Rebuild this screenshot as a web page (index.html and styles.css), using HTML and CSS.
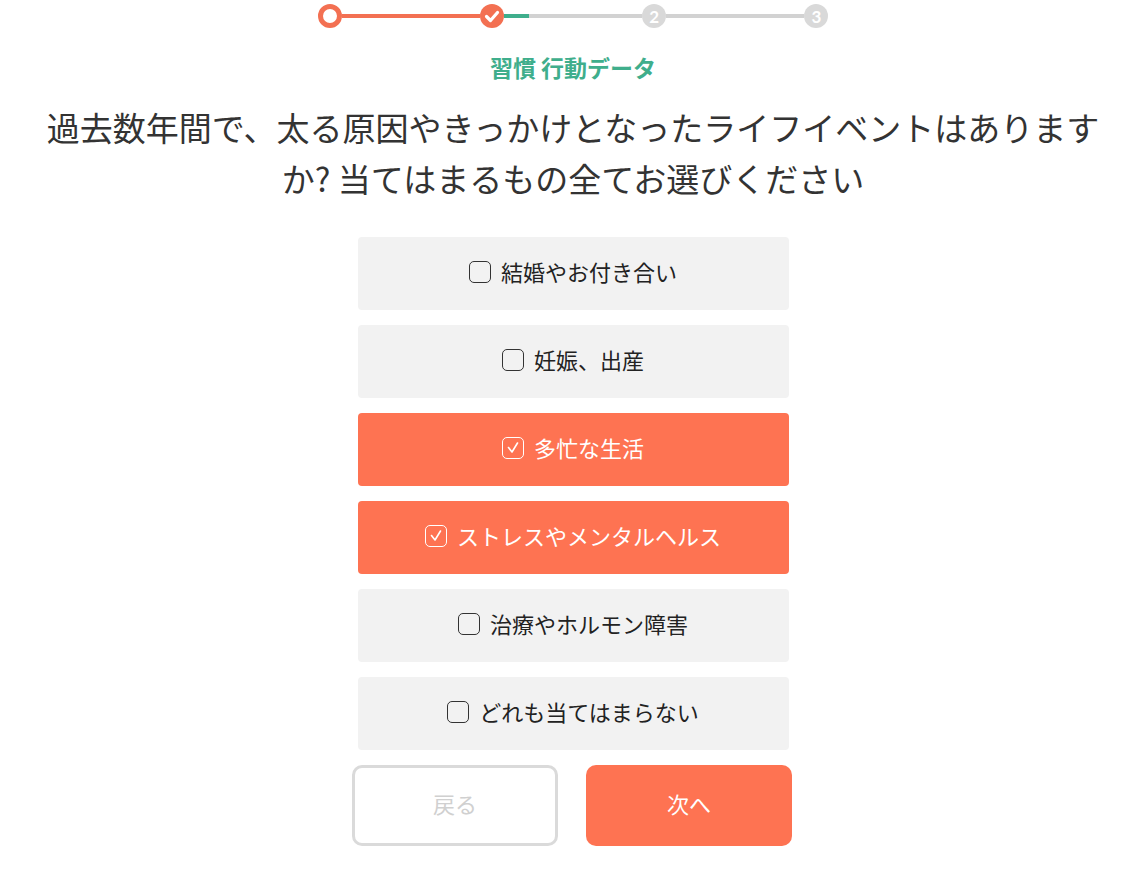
FILE: index.html
```html
<!DOCTYPE html>
<html lang="ja">
<head>
<meta charset="utf-8">
<link rel="stylesheet" href="styles.css">
</head>
<body>
<div class="page">
  <div class="progress">
    <span class="step step-current"></span>
    <span class="line line-done"></span>
    <span class="step step-done">
      <svg viewBox="0 0 24 24" width="24" height="24"><path d="M6.5 12.5 L10.5 16.5 L17.5 8.5" fill="none" stroke="#fff" stroke-width="3.2" stroke-linecap="round" stroke-linejoin="round"/></svg>
    </span>
    <span class="line line-partial"></span>
    <span class="step step-todo">2</span>
    <span class="line"></span>
    <span class="step step-todo">3</span>
  </div>
  <div class="section-title">習慣 行動データ</div>
  <h1 class="question">過去数年間で、太る原因やきっかけとなったライフイベントはありますか? 当てはまるもの全てお選びください</h1>
  <div class="options">
    <div class="option"><span class="box"></span>結婚やお付き合い</div>
    <div class="option"><span class="box"></span>妊娠、出産</div>
    <div class="option option-on"><span class="box"><svg viewBox="0 0 20 20" width="20" height="20"><path d="M5.5 9.5 L9 14 L14.5 5" fill="none" stroke="#fff" stroke-width="1.6" stroke-linecap="round" stroke-linejoin="round"/></svg></span>多忙な生活</div>
    <div class="option option-on"><span class="box"><svg viewBox="0 0 20 20" width="20" height="20"><path d="M5.5 9.5 L9 14 L14.5 5" fill="none" stroke="#fff" stroke-width="1.6" stroke-linecap="round" stroke-linejoin="round"/></svg></span>ストレスやメンタルヘルス</div>
    <div class="option"><span class="box"></span>治療やホルモン障害</div>
    <div class="option"><span class="box"></span>どれも当てはまらない</div>
  </div>
  <div class="actions">
    <button class="btn btn-back">戻る</button>
    <button class="btn btn-next">次へ</button>
  </div>
</div>
</body>
</html>
```
FILE: styles.css
```css
* { box-sizing: border-box; }
html, body { margin: 0; padding: 0; background: #fff; }
body {
  font-family: "Noto Sans CJK JP", "Noto Sans", sans-serif;
  color: #333;
}
.page {
  width: 1146px;
  display: flex;
  flex-direction: column;
  align-items: center;
}
.progress {
  display: flex;
  align-items: center;
  width: 511px;
  margin-top: 4px;
}
.step {
  width: 24px;
  height: 24px;
  border-radius: 50%;
  flex: none;
  display: flex;
  align-items: center;
  justify-content: center;
}
.step-current { background: #fff; border: 5px solid #f37052; }
.step-done { background: #f37052; }
.step-todo {
  background: #d9d9d9;
  color: #fff;
  font-family: "Lato", sans-serif;
  font-weight: 700;
  font-size: 17px;
  line-height: 1;
}
.line {
  flex: 1;
  height: 4px;
  background: #d2d2d2;
}
.line-done { background: #f37052; }
.line-partial { background: linear-gradient(to right, #3fae8c 0, #3fae8c 25px, #d2d2d2 25px); }
.section-title {
  margin-top: 24px;
  color: #3fae8c;
  font-size: 23px;
  font-weight: 700;
  line-height: 30px;
}
.question {
  margin: 20px 0 0;
  font-size: 33px;
  font-weight: 400;
  line-height: 51px;
  text-align: center;
  width: 1070px;
  color: #333;
}
.options {
  margin-top: 33px;
  width: 431px;
  display: flex;
  flex-direction: column;
  gap: 15px;
}
.option {
  height: 73px;
  padding-bottom: 6px;
  border-radius: 4px;
  background: #f2f2f2;
  display: flex;
  align-items: center;
  justify-content: center;
  gap: 10px;
  font-size: 22px;
  color: #222;
}
.option-on { background: #fe7352; color: #fff; }
.box {
  width: 22px;
  height: 22px;
  border: 1.5px solid #333;
  border-radius: 5px;
  display: flex;
  align-items: center;
  justify-content: center;
  flex: none;
  margin-top: 3px;
}
.option-on .box { border-color: #fff; }
.actions {
  margin-top: 15px;
  display: flex;
  gap: 28px;
  margin-left: -2px;
}
.btn {
  width: 206px;
  height: 81px;
  padding: 0 0 5px;
  border-radius: 10px;
  font-family: "Noto Sans CJK JP", sans-serif;
  font-size: 22px;
  cursor: pointer;
}
.btn-back { background: #fff; border: 3px solid #dadada; color: #d0d0d0; }
.btn-next { background: #fe7352; border: none; color: #fff; }
```
